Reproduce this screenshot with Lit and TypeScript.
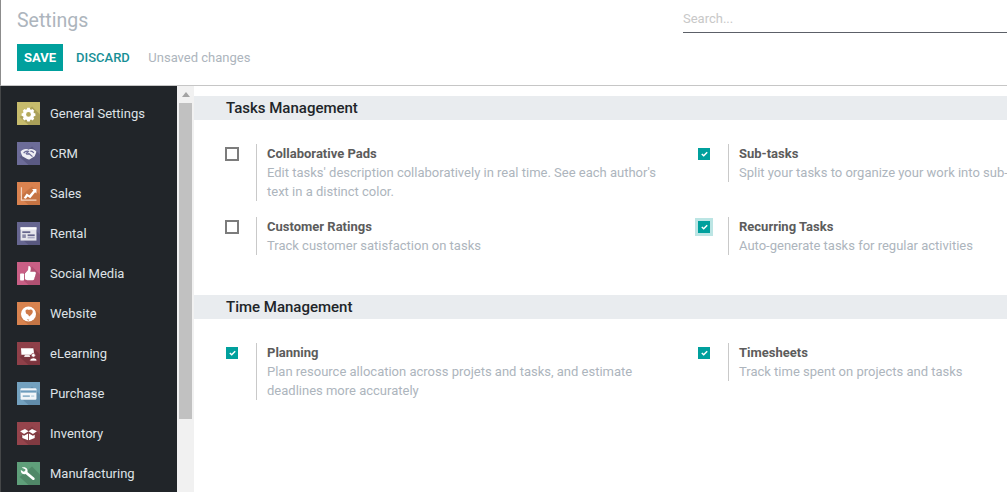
import { LitElement, html, css, svg } from "lit";
import { customElement } from "lit/decorators.js";

const icons: [string, string, string, unknown][] = [
  ["General Settings", "#c6bb6c", "#978d4c", svg`<path d="M11.600 6.500h2.800l.4 1.700 1.200.5 1.500-.9 2 2-.9 1.500.5 1.200 1.700.4v2.800l-1.700.4-.5 1.200.9 1.500-2 2-1.500-.9-1.200.5-.4 1.700h-2.800l-.4-1.700-1.200-.5-1.500.9-2-2 .9-1.500-.5-1.200-1.700-.4v-2.800l1.700-.4.5-1.200-.9-1.500 2-2 1.500.9 1.200-.5z" fill="#fff"/><circle cx="13" cy="14" r="2.700" fill="#b3a85c"/>`],
  ["CRM", "#6c6c98", "#4f4f74", svg`<path d="M4 11c2-2.500 4.500-3.500 7-3 1 .2 1.500.5 2 .8.500-.3 1-.6 2-.8 2.500-.5 5 .5 7 3l-2 5-5.500 3.500c-1 .4-2 .3-3-.3L6 16z" fill="#eeeef4"/><path d="M7.500 12.500c1.500-2 4-2.500 5.500-2l-2.500 2.500c.8 1 2 1 3 0l4 3.500M15 10.500c1.500-.3 3 .3 4 2" fill="none" stroke="#6c6c98" stroke-width="1.400"/>`],
  ["Sales", "#d9824f", "#b96a3c", svg`<path d="M5 6v14.500h17" fill="none" stroke="#f3d3bf" stroke-width="1.400"/><path d="M7.500 18l3.500-5 3 2 4.500-5.500-1.500-1.500h5v5l-1.500-1.500-5.500 7-3-2-2 2.500z" fill="#fff"/>`],
  ["Rental", "#666690", "#4f4f74", svg`<rect x="4" y="6" width="18" height="15" fill="#e6e6ec"/><rect x="4" y="6" width="18" height="2.500" fill="#fff"/><rect x="6" y="10.500" width="9" height="2" fill="#66668c"/><rect x="12" y="14" width="8" height="2" fill="#66668c"/><rect x="6" y="14" width="4" height="4" fill="#8a8aa8"/><rect x="12" y="17" width="8" height="1.500" fill="#a8a8c0"/>`],
  ["Social Media", "#c95f85", "#a34768", svg`<rect x="3.500" y="13" width="4.500" height="8" rx=".8" fill="#fff"/><path d="M9 13l3.500-4 .5-4.500c2.500 0 3.200 2.700 2 6.500h5c1.500 0 1.700 2.500.8 3.200l-.3 1.800-.7 1.600-.4 1.900c-.3.700-1 1-1.700 1h-6.200L9 19.500z" fill="#fff"/>`],
  ["Website", "#d8834f", "#b86d3f", svg`<circle cx="13" cy="13.500" r="8.500" fill="#fff"/><path d="M9.500 10c1-1.800 3-2 4-1 1-1 3.500-.8 4.200 1 .6 1.800-.7 4-2.200 5l-1.800 1.500-1-2-2.500-1.500z" fill="#cf7a49"/><path d="M11 19.500l3 .5-1.200 1.300z" fill="#cf7a49"/>`],
  ["eLearning", "#8f4049", "#6f2f37", svg`<path d="M4.500 7h14l1 7.500H5z" fill="#fff"/><path d="M9 14.500h5l1 2.500H8z" fill="#f0e2e3"/><circle cx="18.500" cy="15" r="2.200" fill="#fff" stroke="#8f4049" stroke-width=".8"/><path d="M14.500 21.500c0-2.500 1.800-3.500 4-3.500s4 1 4 3.500z" fill="#fff" stroke="#8f4049" stroke-width=".8"/>`],
  ["Purchase", "#73a1bf", "#557f9c", svg`<rect x="4" y="7" width="18" height="13" rx="1.200" fill="#f2f6f9"/><rect x="4" y="9.500" width="18" height="2.500" fill="#6d9cbc"/><rect x="6.500" y="15" width="8" height="2" fill="#8fb3ca"/><rect x="16" y="15" width="3.500" height="2" fill="#c4d8e4"/>`],
  ["Inventory", "#95444c", "#74333a", svg`<path d="M3.500 10.500l5.500-2.500 4 2.500-5 3zM22.500 10.500l-5.500-2.500-4 2.500 5 3z" fill="#fff"/><path d="M6 14.500l2 1 4.500-2.500v7.500L6 18zM20 14.500l-2 1-4.500-2.500v7.500l6.500-2.500z" fill="#fff"/>`],
  ["Manufacturing", "#5f9f7a", "#467a5c", svg`<path d="M5.500 6.500c2-1 5-.3 6 1.700.5 1 .6 2 .3 3l7.700 6.500c1.300 1.300-.2 3.500-2 2.500l-7.800-6.500c-1.500.5-3.200.2-4.300-1-1-1-1.300-2.500-1-3.700l3 2 1.800-.7.300-2.100z" fill="#fff"/>`],
];

@customElement("app-root")
export class AppRoot extends LitElement {
  static styles = css`
    :host {
      display: block;
      width: 1007px;
      height: 492px;
      overflow: hidden;
      background: #fff;
      font-family: Roboto, "Liberation Sans", sans-serif;
      font-size: 13px;
      color: #4c4c4c;
    }
    .top {
      height: 86px;
      box-sizing: border-box;
      border-bottom: 1px solid #c6c6c6;
      border-left: 1px solid #8c8c8c;
      padding: 0 0 0 16px;
      display: flex;
      justify-content: space-between;
    }
    .title {
      font-size: 19.500px;
      line-height: 21px;
      color: #adb5bd;
      margin-top: 10px;
    }
    .actions {
      display: flex;
      align-items: center;
      margin-top: 13px;
    }
    .save {
      width: 46px;
      height: 27px;
      background: #00a09d;
      color: #fff;
      font-weight: 700;
      font-size: 13px;
      display: flex;
      align-items: center;
      justify-content: center;
    }
    .discard {
      color: #178f96;
      font-weight: 500;
      margin-left: 13px;
    }
    .unsaved {
      color: #adb5bd;
      margin-left: 18.500px;
    }
    .search {
      width: 324px;
      height: 33px;
      box-sizing: border-box;
      border-bottom: 1px solid #5c6068;
      color: #c8c8c8;
      font-size: 13px;
      line-height: 15px;
      padding-top: 11px;
    }
    .body {
      display: flex;
      height: 406px;
    }
    .side {
      width: 177px;
      flex: none;
      box-sizing: border-box;
      background: #212529;
      border-left: 1px solid #454748;
      padding: 7px 0 0 16px;
      overflow: hidden;
    }
    .item {
      height: 40px;
      display: flex;
      align-items: center;
      color: #dee2e6;
      font-size: 13px;
      gap: 10px;
    }
    .item svg {
      display: block;
      flex: none;
    }
    .glyph {
      filter: blur(0.3px);
    }
    .scroll {
      width: 17px;
      flex: none;
      background: #f1f1f1;
      display: flex;
      flex-direction: column;
      align-items: stretch;
    }
    .arrow {
      height: 17px;
      display: flex;
      align-items: center;
      justify-content: center;
    }
    .arrow i {
      width: 0;
      height: 0;
      border-left: 4px solid transparent;
      border-right: 4px solid transparent;
      border-bottom: 5px solid #a3a3a3;
    }
    .thumb {
      height: 316px;
      margin: 0 2px;
      background: #c1c1c1;
    }
    .main {
      flex: 1;
      min-width: 0;
      padding-top: 10px;
      overflow: hidden;
    }
    .head {
      height: 24px;
      background: #e9ecef;
      color: #212529;
      font-size: 15px;
      font-weight: 500;
      line-height: 24px;
      padding-left: 32px;
    }
    .grid {
      display: grid;
      grid-template-columns: 472px 1fr;
      padding-left: 32px;
      row-gap: 16px;
      margin-top: 24px;
      margin-bottom: 40px;
      white-space: nowrap;
    }
    .setting {
      display: flex;
      align-items: flex-start;
      min-width: 0;
    }
    .box {
      width: 24px;
      flex: none;
      padding-top: 3px;
    }
    .cb {
      width: 14px;
      height: 14px;
      box-sizing: border-box;
      border: 2px solid #7c7c7c;
      background: #fff;
      margin-left: -1px;
    }
    .cb.on {
      width: 12px;
      height: 12px;
      margin: 1px 0 0 0;
      border: none;
      background: #00a09d;
      display: flex;
      align-items: center;
      justify-content: center;
    }
    .cb.focus {
      box-shadow: 0 0 0 3px #bce5e4;
    }
    .text {
      border-left: 1px solid #c9c9c9;
      padding-left: 10px;
      margin-left: 6px;
      line-height: 19px;
      min-width: 0;
    }
    .name {
      color: #5c5c5c;
      font-weight: 700;
      font-size: 13px;
    }
    .desc {
      color: #adb5bd;
      font-size: 13px;
    }
  `;

  private check(on: boolean, focus = false) {
    return on
      ? html`<div class="cb on ${focus ? "focus" : ""}"><svg width="7" height="6" viewBox="0 0 7 6"><path d="M.8 3l1.900 1.800L6.200 1.200" fill="none" stroke="#fff" stroke-width="1.500"/></svg></div>`
      : html`<div class="cb"></div>`;
  }

  private setting(name: string, lines: string[], on: boolean, focus = false) {
    return html`<div class="setting">
      <div class="box">${this.check(on, focus)}</div>
      <div class="text">
        <div class="name">${name}</div>
        ${lines.map((l) => html`<div class="desc">${l}</div>`)}
      </div>
    </div>`;
  }

  render() {
    return html`
      <div class="top">
        <div>
          <div class="title">Settings</div>
          <div class="actions">
            <div class="save">SAVE</div>
            <div class="discard">DISCARD</div>
            <div class="unsaved">Unsaved changes</div>
          </div>
        </div>
        <div class="search">Search...</div>
      </div>
      <div class="body">
        <div class="side">
          ${icons.map(
            ([label, c1, c2, g]) => html`<div class="item">
              <svg width="23" height="23" viewBox="0 0 26 26">
                <rect width="26" height="26" fill="${c1}"/>
                <path d="M3 17L17 5L26 14V26H13Z" fill="${c2}" opacity=".6"/>
                <g class="glyph">${g}</g>
              </svg>
              <span>${label}</span>
            </div>`
          )}
        </div>
        <div class="scroll">
          <div class="arrow"><i></i></div>
          <div class="thumb"></div>
        </div>
        <div class="main">
          <div class="head">Tasks Management</div>
          <div class="grid">
            ${this.setting("Collaborative Pads", ["Edit tasks' description collaboratively in real time. See each author's", "text in a distinct color."], false)}
            ${this.setting("Sub-tasks", ["Split your tasks to organize your work into sub-tasks."], true)}
            ${this.setting("Customer Ratings", ["Track customer satisfaction on tasks"], false)}
            ${this.setting("Recurring Tasks", ["Auto-generate tasks for regular activities"], true, true)}
          </div>
          <div class="head">Time Management</div>
          <div class="grid">
            ${this.setting("Planning", ["Plan resource allocation across projets and tasks, and estimate", "deadlines more accurately"], true)}
            ${this.setting("Timesheets", ["Track time spent on projects and tasks"], true)}
          </div>
        </div>
      </div>
    `;
  }
}
